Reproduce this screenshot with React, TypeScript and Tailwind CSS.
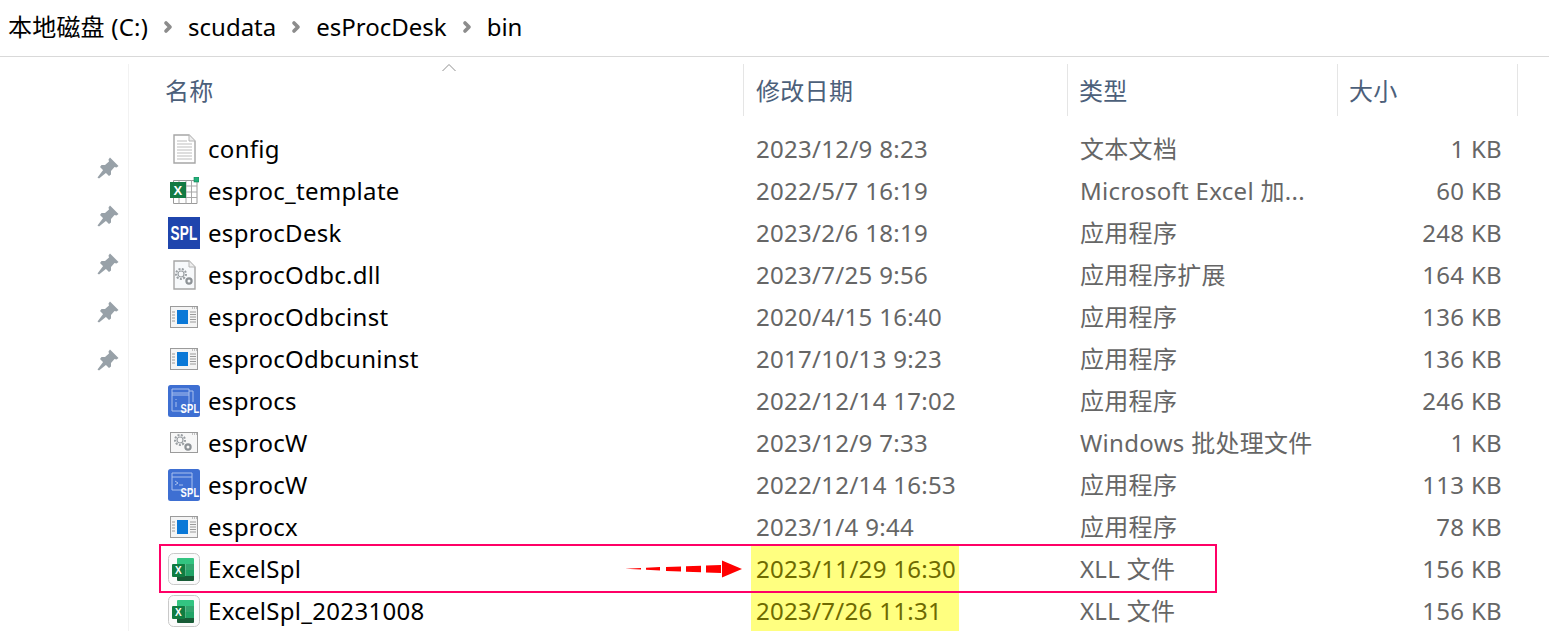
import React from 'react';
import { ChevronRight } from 'lucide-react';

const PinIcon = () => (
  <svg width="22" height="22" viewBox="0 0 22 22" fill="#98a1a8">
    <path d="M13 0.5 L21.5 9 L19.5 10.5 L17.5 10 L14 14 L14 17.5 L12 19 L3 10 L4.5 8 L8 8 L12 4.5 L11.5 2.5 Z" />
    <path d="M6.5 12.5 L9.5 15.5 L2 21.5 L0.5 20.5 Z" />
  </svg>
);

const GearPair = ({ x, y }: { x: number; y: number }) => (
  <g transform={`translate(${x} ${y})`} fill="none" stroke="#9a9fa3">
    <circle cx="6" cy="6" r="5" strokeWidth="2" strokeDasharray="2 1.4" />
    <circle cx="6" cy="6" r="3" strokeWidth="1.2" />
    <circle cx="14" cy="13" r="2.6" strokeWidth="2.2" stroke="#8d9296" />
  </g>
);

const TextFileIcon = () => (
  <svg width="23" height="30" viewBox="0 0 23 30">
    <path d="M1 1 H16 L22 7 V29 H1 Z" fill="#fff" stroke="#a6a6a6" strokeWidth="1.4" />
    <path d="M16 1 V7 H22" fill="#eee" stroke="#b5b5b5" />
    <path d="M4 7h10M4 10h15M4 13h15M4 16h15M4 19h15M4 22h15M4 25h15" stroke="#bdbdbd" strokeWidth="1" />
  </svg>
);

const DllIcon = () => (
  <svg width="23" height="30" viewBox="0 0 23 30">
    <path d="M1 1 H16 L22 7 V29 H1 Z" fill="#f7f9fb" stroke="#a6a6a6" strokeWidth="1.4" />
    <path d="M16 1 V7 H22" fill="#eee" stroke="#b5b5b5" />
    <GearPair x={2} y={8} />
  </svg>
);

const WindowIcon = () => (
  <svg width="28" height="22" viewBox="0 0 28 22">
    <rect x="0.5" y="0.5" width="27" height="21" fill="#f4f4f4" stroke="#9b9b9b" />
    <path d="M22 2h1M24 2h1M26 2h1" stroke="#8a8a8a" />
    <rect x="7" y="4" width="11" height="14" fill="#0a78d7" />
    <path d="M2 6h3M2 9h3M2 12h3M2 15h3M20 6h6M20 8.5h6M20 11h6M20 13.5h6M20 16h6" stroke="#9a9a9a" />
  </svg>
);

const GearWindowIcon = () => (
  <svg width="28" height="22" viewBox="0 0 28 22">
    <rect x="0.5" y="0.5" width="27" height="20" fill="#f7f7f7" stroke="#9b9b9b" />
    <path d="M22 2h1M24 2h1M26 2h1" stroke="#8a8a8a" />
    <GearPair x={4} y={2} />
  </svg>
);

const XlsxIcon = () => (
  <svg width="30" height="28" viewBox="0 0 30 28">
    <path d="M4.5 3.5H28V26.5H4.5Z" fill="#fff" stroke="#9a9a9a" />
    <path d="M10 3.5V26.5M17 3.5V26.5M22.5 3.5V26.5M4.5 9H28M4.5 15H28M4.5 20.5H28" stroke="#a8a8a8" />
    <rect x="1" y="5" width="16" height="16" fill="#137a43" />
    <text x="9" y="18" textAnchor="middle" fontSize="13" fontWeight="700" fill="#fff" fontFamily="Liberation Sans">X</text>
    <rect x="25" y="0" width="5" height="5" fill="#22b07a" stroke="#157f55" strokeWidth="0.6" />
  </svg>
);

const SplIcon = () => (
  <svg width="32" height="32" viewBox="0 0 32 32">
    <rect width="32" height="32" fill="#1f45ad" />
    <text transform="translate(16 23) scale(0.68 1)" textAnchor="middle" fontSize="20" fontWeight="700" fill="#fff" fontFamily="Liberation Sans">SPL</text>
  </svg>
);

const SplDocIcon = ({ shell }: { shell?: boolean }) => (
  <svg width="32" height="32" viewBox="0 0 32 32">
    <rect width="32" height="32" rx="2.5" fill="#3e6fd2" />
    {shell ? (
      <path d="M4 4H24V21H4ZM4 8H24M7 12l3 2-3 2M11 16h4" fill="none" stroke="#a9c1ee" strokeWidth="1" />
    ) : (
      <path d="M4 4H21V26H4ZM21 6H25V17M4 8H21M4 10H21M8 14v1M8 17v5" fill="none" stroke="#a9c1ee" strokeWidth="1" />
    )}
    <text transform="translate(22 28) scale(0.72 1)" textAnchor="middle" fontSize="13" fontWeight="700" fill="#fff" fontFamily="Liberation Sans">SPL</text>
  </svg>
);

const ExcelTileIcon = () => (
  <svg width="32" height="32" viewBox="0 0 32 32">
    <rect x="0.5" y="0.5" width="31" height="31" rx="5" fill="#fbfbfb" stroke="#c9c9c9" />
    <path d="M9 6a1 1 0 0 1 1-1H25a1 1 0 0 1 1 1V11H9Z" fill="#33c481" />
    <rect x="9" y="11" width="8.5" height="6" fill="#21a366" />
    <rect x="17.5" y="11" width="8.5" height="6" fill="#33a56e" />
    <rect x="9" y="17" width="8.5" height="6" fill="#107c41" />
    <rect x="17.5" y="17" width="8.5" height="6" fill="#21a366" />
    <path d="M9 23H26V27a1 1 0 0 1-1 1H10a1 1 0 0 1-1-1Z" fill="#185c37" />
    <rect x="4" y="11" width="13" height="13" rx="1" fill="#107c41" />
    <text x="10.5" y="21" textAnchor="middle" fontSize="10" fontWeight="700" fill="#fff" fontFamily="Liberation Sans">X</text>
  </svg>
);

type FileRow = {
  name: string;
  date: string;
  type: string;
  size: string;
  icon: React.ReactNode;
  mark?: boolean;
};

const files: FileRow[] = [
  { name: 'config', date: '2023/12/9 8:23', type: '文本文档', size: '1 KB', icon: <TextFileIcon /> },
  { name: 'esproc_template', date: '2022/5/7 16:19', type: 'Microsoft Excel 加...', size: '60 KB', icon: <XlsxIcon /> },
  { name: 'esprocDesk', date: '2023/2/6 18:19', type: '应用程序', size: '248 KB', icon: <SplIcon /> },
  { name: 'esprocOdbc.dll', date: '2023/7/25 9:56', type: '应用程序扩展', size: '164 KB', icon: <DllIcon /> },
  { name: 'esprocOdbcinst', date: '2020/4/15 16:40', type: '应用程序', size: '136 KB', icon: <WindowIcon /> },
  { name: 'esprocOdbcuninst', date: '2017/10/13 9:23', type: '应用程序', size: '136 KB', icon: <WindowIcon /> },
  { name: 'esprocs', date: '2022/12/14 17:02', type: '应用程序', size: '246 KB', icon: <SplDocIcon /> },
  { name: 'esprocW', date: '2023/12/9 7:33', type: 'Windows 批处理文件', size: '1 KB', icon: <GearWindowIcon /> },
  { name: 'esprocW', date: '2022/12/14 16:53', type: '应用程序', size: '113 KB', icon: <SplDocIcon shell /> },
  { name: 'esprocx', date: '2023/1/4 9:44', type: '应用程序', size: '78 KB', icon: <WindowIcon /> },
  { name: 'ExcelSpl', date: '2023/11/29 16:30', type: 'XLL 文件', size: '156 KB', icon: <ExcelTileIcon />, mark: true },
  { name: 'ExcelSpl_20231008', date: '2023/7/26 11:31', type: 'XLL 文件', size: '156 KB', icon: <ExcelTileIcon />, mark: true },
];

const crumbs = ['scudata', 'esProcDesk', 'bin'];
const headers = [
  { label: '修改日期', width: 'w-[324px] pl-[12px]' },
  { label: '类型', width: 'w-[270px] pl-[11px]' },
  { label: '大小', width: 'w-[180px] pl-[11px]' },
];

const App: React.FC = () => {
  return (
    <div
      className="relative h-[631px] w-[1549px] overflow-hidden bg-white text-[24px] leading-none tracking-[0.3px]"
      style={{ fontFamily: '"Noto Sans", "Noto Sans CJK SC", sans-serif' }}
    >
      {/* Breadcrumb */}
      <div className="flex h-[57px] items-center border-b border-[#d9d9d9] pb-[3px] pl-[8px] text-black">
        <span className="tracking-[0.2px]">本地磁盘 (C:)</span>
        {crumbs.map((crumb) => (
          <div key={crumb} className="flex items-center">
            <ChevronRight size={16} strokeWidth={5.5} className="mx-[12px] text-[#8c8c8c]" />
            <span className="tracking-normal">{crumb}</span>
          </div>
        ))}
      </div>

      <div className="flex">
        {/* Pinned column */}
        <div className="mt-[7px] flex w-[129px] flex-col items-end gap-[26px] border-r border-[#f2f2f2] pr-[9px] pt-[93px]">
          <PinIcon />
          <PinIcon />
          <PinIcon />
          <PinIcon />
          <PinIcon />
        </div>

        <div className="mt-[7px] flex-1">
          {/* Header */}
          <div className="relative flex h-[52px] items-center text-[#4c607a]">
            <div className="w-[614px] pl-[36px] pt-[2px]">名称</div>
            <svg className="absolute left-[312px] top-[-1px]" width="16" height="9" viewBox="0 0 16 9" fill="none" stroke="#8f8f8f">
              <path d="M1.5 8 L8 1.5 L14.5 8" />
            </svg>
            {headers.map((h) => (
              <div key={h.label} className={`${h.width} h-full border-l border-[#e5e5e5] pt-[15px]`}>
                {h.label}
              </div>
            ))}
            <div className="h-full border-l border-[#e5e5e5]" />
          </div>

          {/* File rows */}
          <div className="mt-[12px]">
            {files.map((file) => (
              <div key={file.name + file.date} className="flex h-[42px] items-center">
                <div className="flex w-[614px] items-center">
                  <div className="flex w-[79px] justify-center pl-[39px] pr-[8px]">
                    <div className="flex w-[32px] justify-center">{file.icon}</div>
                  </div>
                  <span className="text-black">{file.name}</span>
                </div>
                <div className="w-[324px] text-[#666]">
                  <span
                    className={`ml-[8px] flex w-[208px] items-center pl-[5px] ${
                      file.mark ? '-mt-[2px] h-[44px] bg-[#ffff80] pt-[2px] text-[#6e6a00]' : 'h-[42px]'
                    }`}
                  >
                    {file.date}
                  </span>
                </div>
                <div className="w-[258px] pl-[13px] text-[#666]">{file.type}</div>
                <div className="w-[177px] text-right text-[#666]">{file.size}</div>
              </div>
            ))}
          </div>
        </div>
      </div>

      {/* Annotation: pink frame and arrow */}
      <div className="absolute left-[159px] top-[544px] h-[49px] w-[1058px] border-2 border-[#ff0066]" />
      <svg className="absolute left-[625px] top-[558px]" width="118" height="22" viewBox="0 0 118 22" fill="#ff0000">
        <path d="M0 10.7 L16 10 V11.5 Z M21 9.8 L35 9 V12.5 L21 11.8 Z M41 9 L56 8.5 V13.5 L41 13 Z M61 8.3 L76 7.8 V14.2 L61 13.7 Z M81 7.6 L96 7 V15 L81 14.4 Z" />
        <path d="M97 2.5 L117 11 L97 19.5 Z" />
      </svg>
    </div>
  );
};

export default App;
